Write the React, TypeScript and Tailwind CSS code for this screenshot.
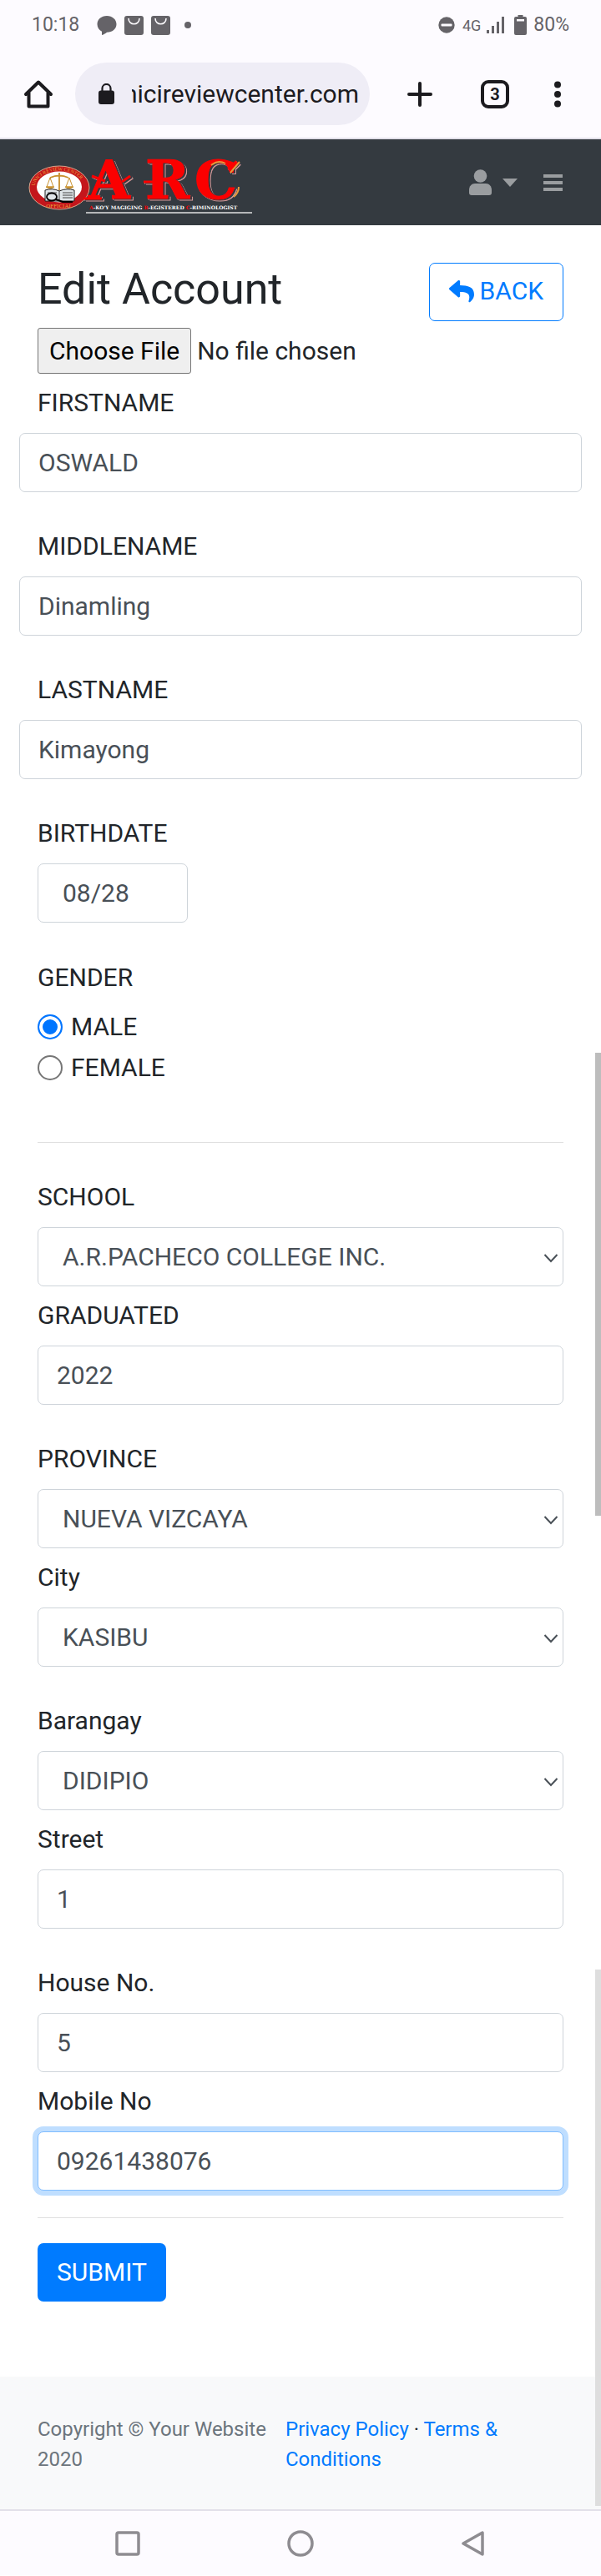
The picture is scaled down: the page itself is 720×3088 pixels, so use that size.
import { useEffect, useRef, type ReactNode } from "react";
import { FaReply } from "react-icons/fa";

const controlClass =
  "block h-[71px] rounded-[7px] border border-[#ced4da] bg-white text-[30px] leading-[45px] text-[#495057] outline-none";

const radioClass =
  "h-[30px] w-[30px] appearance-none rounded-full border-2 border-[#767676] bg-white checked:border-[#0075ff] checked:bg-[#0075ff] checked:shadow-[inset_0_0_0_4px_white]";

function Label({ htmlFor, children }: { htmlFor: string; children: ReactNode }) {
  return (
    <label htmlFor={htmlFor} className="mb-[14px] block text-[30px] leading-[45px]">
      {children}
    </label>
  );
}

function NameField({ id, label, value }: { id: string; label: string; value: string }) {
  return (
    <div className="mb-[42px]">
      <Label htmlFor={id}>{label}</Label>
      <div className="-mx-[22px]">
        <input id={id} defaultValue={value} className={`${controlClass} w-full px-[22px]`} />
      </div>
    </div>
  );
}

function TextField({ id, label, value }: { id: string; label: string; value: string }) {
  return (
    <div>
      <Label htmlFor={id}>{label}</Label>
      <input id={id} defaultValue={value} className={`${controlClass} w-full px-[22px]`} />
    </div>
  );
}

function SelectField({ id, label, value }: { id: string; label: string; value: string }) {
  return (
    <div>
      <Label htmlFor={id}>{label}</Label>
      <div className="relative">
        <select id={id} className={`${controlClass} w-full appearance-none pr-10 pl-[29px]`}>
          <option>{value}</option>
        </select>
        <svg
          viewBox="0 0 18 12"
          className="pointer-events-none absolute top-[31px] right-[6px] h-3 w-[18px]"
          fill="none"
          stroke="#495057"
          strokeWidth="2"
        >
          <path d="M1.500 2L9 10l7.500-8" />
        </svg>
      </div>
    </div>
  );
}

function Pair({ children }: { children: ReactNode }) {
  return <div className="flex flex-col gap-[12px]">{children}</div>;
}

function BagIcon() {
  return (
    <svg viewBox="0 0 23 23" className="h-[23px] w-[23px]">
      <rect width="23" height="23" rx="3" fill="#656368" />
      <path d="M5 3c0 9 13 9 13 0" fill="none" stroke="#fdfbff" strokeWidth="1.6" />
    </svg>
  );
}

function StatusBar() {
  return (
    <div className="flex h-[60px] items-center justify-between px-[38px] text-[23px] text-[#656368]">
      <div className="flex items-center">
        <span className="mr-[21px]">10:18</span>
        <svg viewBox="0 0 24 23" className="mr-[9px] h-[23px] w-6" fill="#656368">
          <path d="M12 0C5.400 0 .5 4.200.5 10c0 3.800 2.200 7 5.500 8.700L6 23c2.500-.6 4.600-1.900 6-3.200 6.600 0 11.500-4.200 11.500-9.800S18.600 0 12 0z" />
        </svg>
        <span className="mr-[9px]">
          <BagIcon />
        </span>
        <BagIcon />
        <span className="ml-[17px] h-2 w-2 rounded-full bg-[#656368]" />
      </div>
      <div className="flex items-center">
        <svg viewBox="0 0 20 20" className="mr-[9px] h-5 w-5">
          <circle cx="10" cy="10" r="9.700" fill="#656368" />
          <rect x="3.500" y="8.500" width="13" height="3" rx="1" fill="#fdfbff" />
        </svg>
        <span className="mr-[7px] text-[18px]">4G</span>
        <svg viewBox="0 0 22 20" className="mr-[11px] h-5 w-[22px]" fill="#656368">
          <rect x="0" y="16" width="3" height="4" />
          <rect x="6" y="11" width="3" height="9" />
          <rect x="12" y="6" width="3" height="14" />
          <rect x="18" y="0" width="3" height="20" />
        </svg>
        <svg viewBox="0 0 15 24" className="mr-2 h-6 w-[15px]">
          <path d="M4.500 0h6v2H13a2 2 0 012 2v18a2 2 0 01-2 2H2a2 2 0 01-2-2V4a2 2 0 012-2h2.500z" fill="#656368" />
          <rect x="3" y="5" width="9" height="2.500" fill="#fdfbff" />
        </svg>
        <span>80%</span>
      </div>
    </div>
  );
}

function BrowserBar() {
  const address = useRef<HTMLInputElement>(null);
  useEffect(() => {
    if (address.current) address.current.scrollLeft = address.current.scrollWidth;
  }, []);
  return (
    <div className="flex h-[107px] items-start border-b-2 border-[#e2e0e9] pt-[15px]">
      <button aria-label="Home" className="mt-[20px] ml-[28px]">
        <svg viewBox="0 0 36 36" className="h-9 w-9" fill="none" stroke="#1c1b1f" strokeWidth="4" strokeLinecap="round" strokeLinejoin="round">
          <path d="M3 18L18 3.500 33 18M6.500 16v16.500h23V16" />
        </svg>
      </button>
      <div className="ml-[26px] flex h-[75px] flex-1 items-center rounded-full bg-[#efedf6] pr-[13px] pl-[28px]">
        <svg viewBox="0 0 19 25" className="mr-[21px] h-[25px] w-[19px] shrink-0">
          <rect x="0" y="8.500" width="19" height="16.500" rx="3" fill="#1c1b1f" />
          <path d="M4.500 10V6a5 5 0 0110 0v4" fill="none" stroke="#1c1b1f" strokeWidth="2.200" />
        </svg>
        <input
          ref={address}
          readOnly
          aria-label="Address"
          defaultValue="nicireviewcenter.com"
          className="h-[45px] w-full min-w-0 bg-transparent text-[30px] text-[#1c1b1f] outline-none"
        />
      </div>
      <div className="mt-[20px] mr-[48px] ml-[45px] flex items-center">
        <button aria-label="New tab" className="mr-[58px]">
          <svg viewBox="0 0 30 36" className="h-9 w-[30px]" stroke="#1c1b1f" strokeWidth="4" strokeLinecap="round">
            <path d="M15 5v26M2 18h26" />
          </svg>
        </button>
        <button
          aria-label="Tabs"
          className="mr-[54px] flex h-[34px] w-[34px] items-center justify-center rounded-[9px] border-4 border-[#1c1b1f] text-[20px] leading-none font-bold text-[#1c1b1f]"
        >
          3
        </button>
        <button aria-label="Menu">
          <svg viewBox="0 0 8 36" className="h-9 w-2" fill="#1c1b1f">
            <circle cx="4" cy="6.500" r="4" />
            <circle cx="4" cy="18" r="4" />
            <circle cx="4" cy="29.500" r="4" />
          </svg>
        </button>
      </div>
    </div>
  );
}

function Logo() {
  return (
    <svg viewBox="0 0 268 72" className="h-[72px] w-[268px] overflow-visible" role="img" aria-label="ARC">
      <defs>
        <path id="seal-top" d="M7 44a30 21.500 0 0160 0" />
      </defs>
      <ellipse cx="37" cy="43" rx="36" ry="26" fill="#c4161c" stroke="#d9a58a" strokeWidth="1" />
      <ellipse cx="37" cy="42" rx="27" ry="18.500" fill="#fff" />
      <text fontSize="6" fill="#e9a23b" className="font-['Liberation_Serif',serif]">
        <textPath href="#seal-top" startOffset="3">UNICI REVIEW CENTER</textPath>
      </text>
      <text x="37" y="67" textAnchor="middle" fontSize="7" fill="#e9a23b" className="font-['Liberation_Serif',serif]">
        OFFICIAL
      </text>
      <g stroke="#c8912e" fill="none" strokeWidth="1">
        <path d="M37 25v21M26 31q11-5 22 0" strokeWidth="1.800" />
        <path d="M26 31l-4 11h8zM49 31l-4 11h8z" />
        <path d="M21 42q5 4 10 0zM44 42q5 4 10 0z" fill="#c8912e" />
      </g>
      <path d="M20 46q9-3 17 1 9-4 18-1v13H20z" fill="#dfe5e8" stroke="#222" strokeWidth="1" />
      <path d="M37 47v12M41 49h12M41 52h12M41 55h12M23 49h11" stroke="#444" strokeWidth="1" />
      <ellipse cx="28" cy="54" rx="6" ry="4.500" fill="none" stroke="#000" strokeWidth="1.800" />
      <path d="M33 57l8 3h12" fill="none" stroke="#000" strokeWidth="2.200" />
      <g
        fill="#fb0000"
        stroke="#fb0000"
        className="font-['DejaVu_Serif',serif] [filter:drop-shadow(2px_1px_0_#343a40)_drop-shadow(1px_1px_0_#d99a9a)]"
      >
        <text x="72" y="56" fontSize="64" fontWeight="700" strokeWidth="1">A</text>
        <text x="140" y="56" fontSize="64" fontWeight="700" strokeWidth="1">R</text>
        <text x="199" y="56" fontSize="64" fontWeight="700" strokeWidth="1">C</text>
        <path d="M66 56h22M76 29l16 6M112 36l10-7M138 36h14" strokeWidth="3" />
        <path d="M250 12l-10 10" strokeWidth="5" />
      </g>
      <path d="M253 12l-11 13M219 16q8-7 17-2M252 42q0 7-6 12" fill="none" stroke="#e59a3c" strokeWidth="2" />
      <text x="73" y="69" fontSize="6" fontWeight="700" fill="#fff" className="font-['DejaVu_Serif',serif]">
        <tspan fill="#fb0000">A</tspan>-KO'Y MAGIGING <tspan fill="#fb0000">R</tspan>-EGISTERED{" "}
        <tspan fill="#fb0000">C</tspan>-RIMINOLOGIST
      </text>
    </svg>
  );
}

function SiteNav() {
  return (
    <nav className="flex h-[103px] items-center justify-between bg-[#343a40] pr-[46px] pl-[34px]">
      <a href="#home" className="flex flex-col items-end">
        <Logo />
        <span className="h-[2px] w-[199px] bg-[#b5b7b9]" />
      </a>
      <div className="flex items-center text-[#9a9da0]">
        <button aria-label="User menu" className="mr-[31px] flex items-center gap-[13px]">
          <svg viewBox="0 0 27 31" className="h-[31px] w-[27px]" fill="currentColor">
            <circle cx="13.500" cy="8" r="7.800" />
            <path d="M0 28v-3c0-5 3-8 7-8h13c4 0 7 3 7 8v3q0 3-3 3H3q-3 0-3-3z" />
          </svg>
          <svg viewBox="0 0 18 10" className="h-[10px] w-[18px]" fill="currentColor">
            <path d="M0 0h18L9 10z" />
          </svg>
        </button>
        <button aria-label="Toggle navigation">
          <svg viewBox="0 0 23 20" className="h-5 w-[23px]" fill="currentColor">
            <path d="M0 0h23v4H0zM0 8h23v4H0zM0 16h23v4H0z" />
          </svg>
        </button>
      </div>
    </nav>
  );
}

function NavigationBar() {
  return (
    <div className="flex h-[79px] items-center justify-around border-t-2 border-[#e2e0e9] bg-[#fdfbff] px-[50px]">
      <button aria-label="Recent apps">
        <svg viewBox="0 0 32 32" className="h-8 w-8" fill="none" stroke="#8e8c91" strokeWidth="3.500">
          <rect x="3" y="3" width="26" height="26" rx="2" />
        </svg>
      </button>
      <button aria-label="Home screen">
        <svg viewBox="0 0 32 32" className="h-8 w-8" fill="none" stroke="#8e8c91" strokeWidth="3.500">
          <circle cx="16" cy="16" r="14" />
        </svg>
      </button>
      <button aria-label="Back">
        <svg viewBox="0 0 32 32" className="h-8 w-8" fill="none" stroke="#8e8c91" strokeWidth="3.500" strokeLinejoin="round">
          <path d="M27 3v26L4 16z" />
        </svg>
      </button>
    </div>
  );
}

export default function App() {
  return (
    <div className="relative bg-white font-[Roboto,sans-serif] text-[#212529]">
      <header className="bg-[#fdfbff]">
        <StatusBar />
        <BrowserBar />
      </header>
      <SiteNav />
      <main className="px-[45px] pt-[45px] pb-[90px]">
        <div className="mb-[8px] flex items-start justify-between">
          <h1 className="text-[52px] leading-[63px]">Edit Account</h1>
          <a
            href="#back"
            className="flex h-[70px] items-center gap-[7px] rounded-[7px] border border-[#007bff] px-[23px] pb-[3px] text-[30px] text-[#007bff]"
          >
            <FaReply className="h-[30px] w-[30px]" />
            BACK
          </a>
        </div>
        <form>
          <input
            type="file"
            aria-label="Photo"
            className="mb-[12px] block h-[55px] w-full text-[30px] file:mr-[7px] file:h-[55px] file:rounded-[3px] file:border file:border-[#767676] file:bg-[#efefef] file:px-[13px] file:text-black"
          />
          <NameField id="firstname" label="FIRSTNAME" value="OSWALD" />
          <NameField id="middlename" label="MIDDLENAME" value="Dinamling" />
          <NameField id="lastname" label="LASTNAME" value="Kimayong" />
          <div className="mb-[43px]">
            <Label htmlFor="birthdate">BIRTHDATE</Label>
            <input id="birthdate" defaultValue="08/28" className={`${controlClass} w-[180px] px-[29px]`} />
          </div>
          <fieldset>
            <legend className="mb-[12px] block text-[30px] leading-[45px]">GENDER</legend>
            <label className="flex h-[49px] items-center gap-[10px] text-[30px]">
              <input type="radio" name="gender" defaultChecked className={radioClass} />
              MALE
            </label>
            <label className="flex h-[49px] items-center gap-[10px] text-[30px]">
              <input type="radio" name="gender" className={radioClass} />
              FEMALE
            </label>
          </fieldset>
          <hr className="mt-[65px] mb-[42px] border-t border-[#e0e0e0]" />
          <div className="flex flex-col gap-[42px]">
            <Pair>
              <SelectField id="school" label="SCHOOL" value="A.R.PACHECO COLLEGE INC." />
              <TextField id="graduated" label="GRADUATED" value="2022" />
            </Pair>
            <Pair>
              <SelectField id="province" label="PROVINCE" value="NUEVA VIZCAYA" />
              <SelectField id="city" label="City" value="KASIBU" />
            </Pair>
            <Pair>
              <SelectField id="barangay" label="Barangay" value="DIDIPIO" />
              <TextField id="street" label="Street" value="1" />
            </Pair>
            <Pair>
              <TextField id="house" label="House No." value="5" />
              <div>
                <Label htmlFor="mobile">Mobile No</Label>
                <input
                  id="mobile"
                  defaultValue="09261438076"
                  className="block h-[71px] w-full rounded-[7px] border border-[#80bdff] bg-white px-[22px] text-[30px] text-[#495057] ring-6 ring-[#bfdeff] outline-none"
                />
              </div>
            </Pair>
          </div>
          <hr className="mt-[32px] mb-[30px] border-t border-[#e0e0e0]" />
          <button type="button" className="block h-[70px] rounded-[7px] bg-[#007bff] px-[23px] pb-[2px] text-[30px] text-white">
            SUBMIT
          </button>
        </form>
      </main>
      <footer className="flex gap-[22px] bg-[#f8f9fa] px-[45px] pt-[45px] pb-[42px] text-[24px] leading-[36px]">
        <div className="w-[275px] text-[#6c757d]">Copyright © Your Website 2020</div>
        <div className="w-[275px]">
          <a href="#privacy" className="text-[#007bff]">Privacy Policy</a> ·{" "}
          <a href="#terms" className="text-[#007bff]">Terms &amp; Conditions</a>
        </div>
      </footer>
      <NavigationBar />
      <div className="absolute top-[1262px] right-0 h-[555px] w-[7px] bg-[#bdbdbd]" />
      <div className="absolute top-[2361px] right-0 h-[643px] w-[7px] bg-[#dedede]" />
    </div>
  );
}
